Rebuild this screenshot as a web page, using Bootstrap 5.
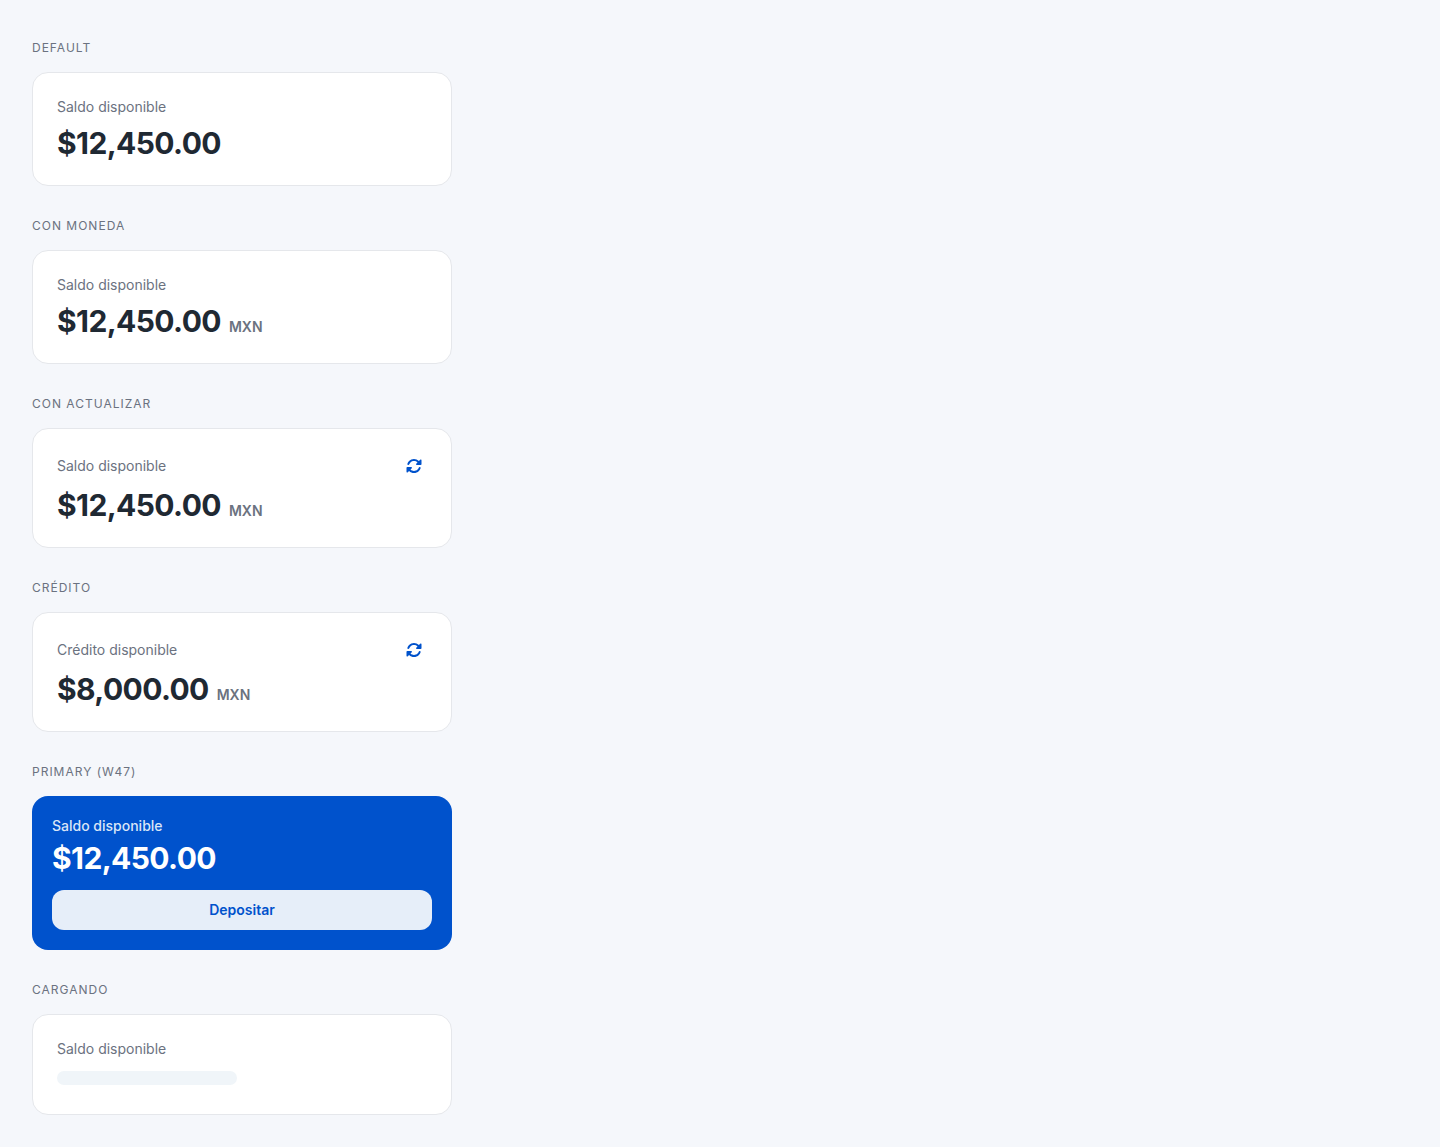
<!DOCTYPE html>
<html lang="es">
<head>
<meta charset="utf-8">
<meta name="viewport" content="width=device-width, initial-scale=1">
<title>Saldo disponible</title>
<link href="https://cdn.jsdelivr.net/npm/bootstrap@5.3.0/dist/css/bootstrap.min.css" rel="stylesheet">
<style>
  body { background: #f5f7fb; font-family: Inter, "Liberation Sans", sans-serif; color: #1f2933; }
  .balance-list { padding: 40px 32px 32px; gap: 32px; }
  .balance-section { max-width: 420px; }
  .section-title { font-size: 12px; line-height: 16px; font-weight: 400; letter-spacing: 1px; color: #6b7280; margin: 0 0 16px; text-transform: uppercase; }
  .balance-card { border: 1px solid #e5e7eb; border-radius: 16px; padding: 24px; background: #fff; }
  .balance-label { font-size: 14px; line-height: 20px; color: #6b7280; }
  .balance-head { margin-bottom: 8px; }
  .balance-amount { font-size: 30px; line-height: 36px; font-weight: 700; letter-spacing: -0.02em; }
  .balance-currency { font-size: 14px; line-height: 20px; font-weight: 600; color: #6b7280; }
  .refresh-btn { width: 26px; height: 26px; color: #0052cc; }
  .refresh-btn svg { width: 16px; height: 16px; }
  .balance-primary { border: 0; padding: 20px; background: #0052cc; color: #fff; }
  .balance-primary .balance-label { font-weight: 500; color: #d9e5f7; }
  .balance-primary .balance-head { margin-bottom: 4px; }
  .deposit-btn { --bs-btn-bg: #e6eef9; --bs-btn-color: #0052cc; --bs-btn-hover-bg: #fff; --bs-btn-hover-color: #0052cc; margin-top: 14px; padding: 10px 16px; border: 0; border-radius: 12px; font-size: 14px; line-height: 20px; font-weight: 600; }
  .balance-skeleton { width: 180px; height: 14px; margin: 4px 0 5px; border-radius: 7px; background: #f0f5f9; }
</style>
</head>
<body>
<svg class="d-none" aria-hidden="true">
  <symbol id="rotate" viewBox="0 0 512 512">
    <path fill="currentColor" d="M142.900 142.900c62.200-62.200 162.700-62.500 225.300-1L327 183c-6.900 6.900-8.900 17.200-5.200 26.200s12.500 14.800 22.200 14.800H472c13.300 0 24-10.700 24-24V72c0-9.700-5.800-18.500-14.800-22.200s-19.300-1.700-26.200 5.200L413.400 96.600c-87.600-86.500-228.700-86.200-315.800 1C73.200 122 55.600 150.700 44.800 181.400c-5.900 16.700 2.900 34.900 19.500 40.800s34.900-2.900 40.800-19.500c7.700-21.800 20.200-42.300 37.800-59.800zM16 312V440c0 9.700 5.800 18.500 14.800 22.200s19.300 1.700 26.200-5.200l41.600-41.600c87.600 86.500 228.700 86.200 315.800-1c24.400-24.400 42.100-53.100 52.900-83.700c5.900-16.700-2.900-34.900-19.500-40.800s-34.900 2.900-40.800 19.500c-7.700 21.800-20.200 42.300-37.800 59.800c-62.200 62.200-162.700 62.500-225.300 1L185 329c6.900-6.900 8.900-17.200 5.200-26.200s-12.500-14.800-22.200-14.800H40c-13.300 0-24 10.700-24 24z"/>
  </symbol>
</svg>
<main class="balance-list d-flex flex-column">
  <section class="balance-section w-100">
    <h2 class="section-title">Default</h2>
    <div class="balance-card">
      <div class="balance-head balance-label">Saldo disponible</div>
      <div class="balance-amount">$12,450.00</div>
    </div>
  </section>

  <section class="balance-section w-100">
    <h2 class="section-title">Con moneda</h2>
    <div class="balance-card">
      <div class="balance-head balance-label">Saldo disponible</div>
      <div class="d-flex align-items-baseline gap-2">
        <span class="balance-amount">$12,450.00</span>
        <span class="balance-currency">MXN</span>
      </div>
    </div>
  </section>

  <section class="balance-section w-100">
    <h2 class="section-title">Con actualizar</h2>
    <div class="balance-card">
      <div class="balance-head d-flex align-items-center justify-content-between">
        <span class="balance-label">Saldo disponible</span>
        <button type="button" class="refresh-btn btn border-0 p-0 d-flex align-items-center justify-content-center" aria-label="Actualizar saldo"><svg aria-hidden="true"><use href="#rotate"/></svg></button>
      </div>
      <div class="d-flex align-items-baseline gap-2">
        <span class="balance-amount">$12,450.00</span>
        <span class="balance-currency">MXN</span>
      </div>
    </div>
  </section>

  <section class="balance-section w-100">
    <h2 class="section-title">Crédito</h2>
    <div class="balance-card">
      <div class="balance-head d-flex align-items-center justify-content-between">
        <span class="balance-label">Crédito disponible</span>
        <button type="button" class="refresh-btn btn border-0 p-0 d-flex align-items-center justify-content-center" aria-label="Actualizar crédito"><svg aria-hidden="true"><use href="#rotate"/></svg></button>
      </div>
      <div class="d-flex align-items-baseline gap-2">
        <span class="balance-amount">$8,000.00</span>
        <span class="balance-currency">MXN</span>
      </div>
    </div>
  </section>

  <section class="balance-section w-100">
    <h2 class="section-title">Primary (W47)</h2>
    <div class="balance-card balance-primary">
      <div class="balance-head balance-label">Saldo disponible</div>
      <div class="balance-amount">$12,450.00</div>
      <button type="button" class="deposit-btn btn w-100">Depositar</button>
    </div>
  </section>

  <section class="balance-section w-100">
    <h2 class="section-title">Cargando</h2>
    <div class="balance-card" aria-busy="true">
      <div class="balance-head balance-label">Saldo disponible</div>
      <div class="d-flex"><div class="balance-skeleton"></div></div>
    </div>
  </section>
</main>
<script src="https://cdn.jsdelivr.net/npm/bootstrap@5.3.0/dist/js/bootstrap.bundle.min.js"></script>
</body>
</html>
